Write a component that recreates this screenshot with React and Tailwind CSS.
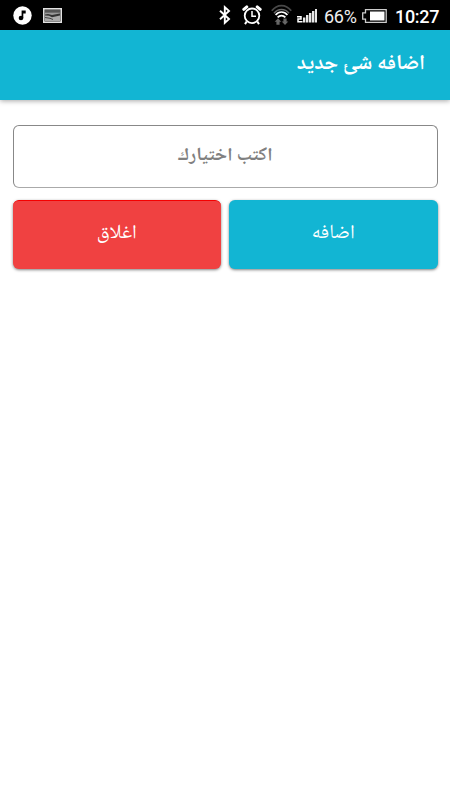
function MusicIcon() {
  return (
    <svg width="19" height="19" viewBox="0 0 19 19">
      <circle cx="9.5" cy="9.5" r="9.2" fill="#fff" />
      <circle cx="8" cy="12" r="2.3" fill="#000" />
      <path d="M8.6 4.5h4.1v3h-2.4v4.8H8.6z" fill="#000" />
    </svg>
  );
}

function PictureIcon() {
  return (
    <svg width="19" height="15" viewBox="0 0 19 15">
      <rect width="19" height="15" fill="#e2e2e2" />
      <rect x="1.5" y="1.5" width="16" height="12" fill="#333" />
      <rect x="2" y="2" width="15" height="2.4" fill="#555" />
      <path d="M2 4.5h15v1L9 7 5 6 2 6.5z" fill="#999" />
      <path d="M2 7.5l4 .3 3 1.4 8-1.7v5.5H2z" fill="#aaa" />
      <path d="M2 9.5l5 .8 3 1.2" stroke="#444" fill="none" />
    </svg>
  );
}

function BluetoothIcon() {
  return (
    <svg width="12" height="20" viewBox="0 0 12 20" fill="none" stroke="#fff" strokeWidth="1.9">
      <path d="M1 5.7l9 8.4-4.2 3.7V2.2l4.2 3.7-9 8.4" />
    </svg>
  );
}

function AlarmIcon() {
  return (
    <svg width="20" height="20" viewBox="0 0 20 20" fill="none" stroke="#fff">
      <circle cx="10" cy="10.8" r="7.3" strokeWidth="1.8" />
      <path d="M10 6v5.2h4" strokeWidth="1.5" />
      <path d="M1.8 4.4l3-2.5M18.2 4.4l-3-2.5" strokeWidth="3" strokeLinecap="round" />
      <path d="M4.7 16.5l-1.7 2.6M15.3 16.5l1.7 2.6" strokeWidth="2" />
    </svg>
  );
}

function WifiIcon() {
  return (
    <svg width="21" height="22" viewBox="0 0 21 22" fill="none">
      <path d="M.8 6.8c5.3-7 14.1-7 19.4 0" stroke="#484848" strokeWidth="1.8" />
      <path d="M3 9.2c4-4.9 11-4.9 15 0" stroke="#666" strokeWidth="1.5" />
      <path d="M4.6 11c3.3-4 8.5-4 11.8 0" stroke="#fff" strokeWidth="1.7" />
      <path d="M6.6 13.4c2.2-2.4 5.6-2.4 7.8 0" stroke="#fff" strokeWidth="1.7" />
      <path d="M7 14.3l3.3 3.5H8.6v3H5.4v-3H3.7zM14 21l-3.3-3.5h1.7v-3h3.2v3h1.7z" fill="#666" />
    </svg>
  );
}

function SignalIcon() {
  return (
    <svg width="20" height="14" viewBox="0 0 20 14">
      <path d="M0 7.7h4v2.4H1v2.7h4.5" fill="none" stroke="#fff" strokeWidth="1.5" />
      <path d="M6 8.5h2.4v5H6zM9 6h2.4v7.5H9zM12 4h2.4v9.5H12zM15 2h2.4v11.5H15zM18 0h2v13.5h-2z" fill="#e8e8e8" />
    </svg>
  );
}

function BatteryIcon() {
  return (
    <svg width="25" height="14" viewBox="0 0 25 14">
      <path d="M3.5 3.8V.7h20.7v12.6H3.5v-3.1H.7V3.8z" fill="none" stroke="#ccc" strokeWidth="1.3" />
      <rect x="8" y="2.5" width="14.5" height="9" fill="#fff" />
    </svg>
  );
}

function StatusBar() {
  return (
    <div dir="ltr" className="h-[30px] bg-black flex items-center pl-[13px] pr-[10px] font-['Roboto',sans-serif] text-white">
      <MusicIcon />
      <div className="ml-[11px] pt-px">
        <PictureIcon />
      </div>
      <div className="ml-auto flex items-center">
        <BluetoothIcon />
        <div className="ml-[11px]">
          <AlarmIcon />
        </div>
        <div className="ml-[9px]">
          <WifiIcon />
        </div>
        <div className="ml-[5px] pt-0.5">
          <SignalIcon />
        </div>
        <span className="ml-[7px] w-[33px] text-[18px] leading-none tracking-[-0.3px] text-[#eee] pt-1">66%</span>
        <div className="ml-[5px] pt-px">
          <BatteryIcon />
        </div>
        <span className="ml-[8px] w-[45px] text-[18px] leading-none font-medium tracking-[-0.3px] pt-1">10:27</span>
      </div>
    </div>
  );
}

export default function App() {
  return (
    <div dir="rtl" className="w-[450px] h-[800px] bg-white overflow-hidden font-['Noto_Naskh_Arabic_UI','Noto_Naskh_Arabic','DejaVu_Sans',sans-serif]">
      <StatusBar />
      <header className="h-[70px] pb-0.5 bg-[#12b5d3] flex items-center px-[25px] shadow-[0_1px_5px_rgba(0,0,0,0.35)]">
        <h1 className="text-[21.2px] leading-none font-bold text-white">اضافه شئ جديد</h1>
      </header>

      <main className="px-[12.5px] pt-[25px]">
        <input
          type="text"
          placeholder="اكتب اختيارك"
          className="block w-full h-[62.5px] pb-px rounded-[6px] border border-[#888] border-b-[#aaa] text-center text-[18.8px] font-bold placeholder:text-[#808080] outline-none"
        />
        <div className="mt-[12.5px] flex gap-2">
          <button className="flex-1 h-[69px] pb-0.5 rounded-[6px] bg-[#12b5d3] text-white text-[20px] shadow-[0_1px_3px_rgba(0,0,0,0.5)]">
            اضافه
          </button>
          <button className="flex-1 h-[69px] pb-[3px] rounded-[6px] bg-[#f04141] border-t border-[#f50000] text-white text-[20px] shadow-[0_1px_3px_rgba(0,0,0,0.5)]">
            اغلاق
          </button>
        </div>
      </main>
    </div>
  );
}
